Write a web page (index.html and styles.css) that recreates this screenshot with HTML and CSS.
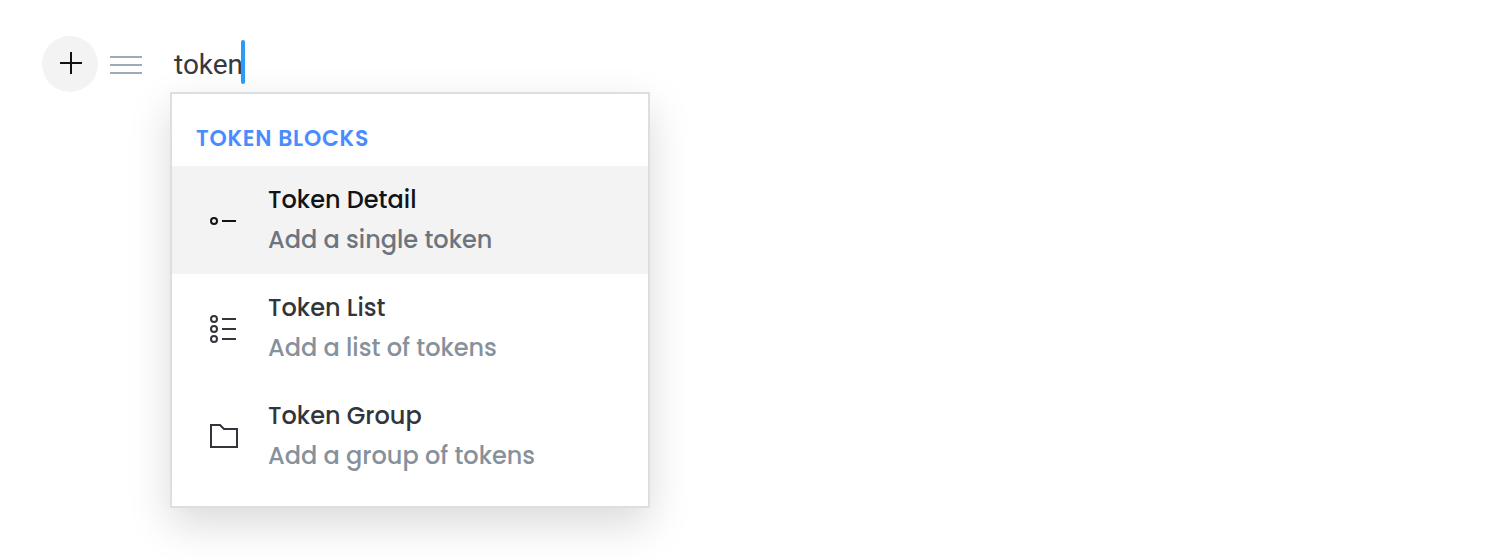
FILE: index.html
```html
<!DOCTYPE html>
<html lang="en">
<head>
    <meta charset="UTF-8">
    <meta name="viewport" content="width=device-width, initial-scale=1.0">
    <title>Token Blocks</title>
    <link rel="stylesheet" href="styles.css">
</head>
<body>
    <div class="block">
        <button class="add-button" type="button" aria-label="Add block">
            <svg width="22" height="22" viewBox="0 0 22 22">
                <path d="M11 0V22M0 11H22" stroke="#111" stroke-width="2"/>
            </svg>
        </button>
        <svg class="drag-handle" width="32" height="18" viewBox="0 0 32 18">
            <path d="M0 1H32M0 9H32M0 17H32" stroke="#9faab7" stroke-width="2"/>
        </svg>
        <div class="editor">
            <span class="query">token</span>
            <span class="caret"></span>
        </div>
    </div>
    <div class="menu">
        <h2 class="menu-title">TOKEN BLOCKS</h2>
        <div class="item selected">
            <svg class="icon" width="28" height="28" viewBox="0 0 28 28" fill="none" stroke="currentColor" stroke-width="2">
                <circle cx="4" cy="14" r="3"/>
                <path d="M12 14H26"/>
            </svg>
            <div class="text">
                <div class="name">Token Detail</div>
                <div class="description">Add a single token</div>
            </div>
        </div>
        <div class="item">
            <svg class="icon" width="28" height="28" viewBox="0 0 28 28" fill="none" stroke="currentColor" stroke-width="2">
                <circle cx="4" cy="4" r="3"/>
                <circle cx="4" cy="14" r="3"/>
                <circle cx="4" cy="24" r="3"/>
                <path d="M12 4H26M12 14H26M12 24H26"/>
            </svg>
            <div class="text">
                <div class="name">Token List</div>
                <div class="description">Add a list of tokens</div>
            </div>
        </div>
        <div class="item">
            <svg class="icon" width="28" height="28" viewBox="0 0 28 28" fill="none" stroke="currentColor" stroke-width="2">
                <path d="M1 2H10L14 6H27V24H1Z"/>
            </svg>
            <div class="text">
                <div class="name">Token Group</div>
                <div class="description">Add a group of tokens</div>
            </div>
        </div>
    </div>
</body>
</html>
```
FILE: styles.css
```css
body {
    min-height: 100vh;
    margin: 0;
    padding: 36px 0 0 42px;
    box-sizing: border-box;
    background-color: #fff;
    font-family: Poppins, Inter, sans-serif;
}
.block {
    display: flex;
    align-items: center;
    height: 56px;
}
.add-button {
    display: flex;
    align-items: center;
    justify-content: center;
    width: 56px;
    height: 56px;
    padding: 0 0 2px 2px;
    box-sizing: border-box;
    border: none;
    border-radius: 50%;
    background-color: #f3f3f3;
}
.drag-handle {
    margin: 2px 0 0 12px;
}
.editor {
    display: flex;
    align-items: center;
    margin-left: 32px;
    color: #35383d;
    font-family: Roboto, sans-serif;
    font-size: 28px;
    line-height: 44px;
}
.query {
    padding-top: 2px;
}
.caret {
    width: 4px;
    height: 44px;
    margin: -4px 0 0 -2px;
    border-radius: 2px;
    background-color: #2b9bf4;
}
.menu {
    width: 480px;
    height: 416px;
    margin-left: 128px;
    box-sizing: border-box;
    border: 2px solid #dadfe4;
    background-color: #fff;
    box-shadow: 0 16px 40px rgba(0, 0, 0, 0.15);
}
.menu-title {
    height: 72px;
    margin: 0;
    padding: 29px 0 0 24px;
    box-sizing: border-box;
    color: #4a8cff;
    font-size: 22px;
    font-weight: 600;
    letter-spacing: 0.75px;
    line-height: 32px;
}
.item {
    display: flex;
    align-items: center;
    height: 108px;
    padding-left: 38px;
    color: #32353b;
}
.selected {
    background-color: #f3f3f3;
    color: #111416;
}
.icon {
    flex: none;
    margin-top: 2px;
}
.text {
    margin-left: 30px;
    font-size: 24px;
    font-weight: 500;
    line-height: 40px;
    white-space: nowrap;
}
.description {
    color: #86919b;
}
.selected .description {
    color: #6c757e;
}
```
